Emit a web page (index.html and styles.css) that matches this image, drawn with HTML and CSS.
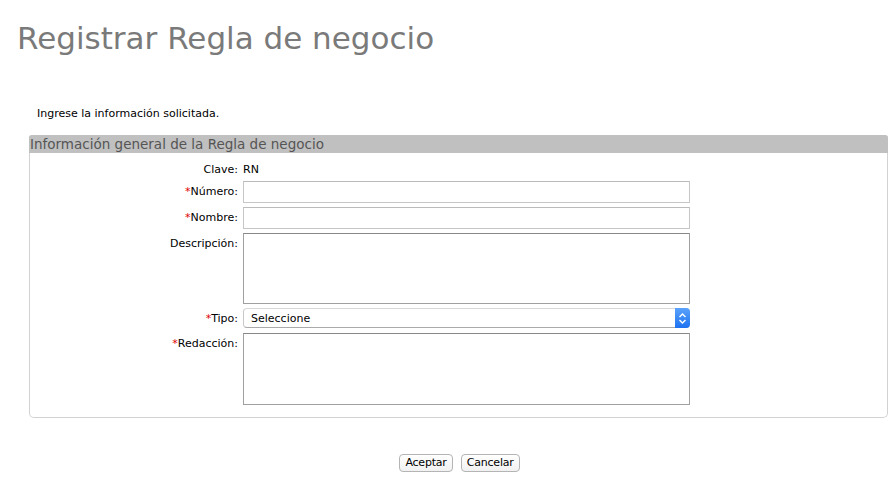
FILE: index.html
```html
<!DOCTYPE html>
<html lang="es">
<head>
<meta charset="utf-8">
<title>Registrar Regla de negocio</title>
<link rel="stylesheet" href="styles.css">
</head>
<body>
<h1 class="title">Registrar Regla de negocio</h1>
<p class="intro">Ingrese la información solicitada.</p>
<section class="panel">
  <div class="panel-head">Información general de la Regla de negocio</div>
  <div class="panel-body">
    <div class="row row-text">
      <span class="label">Clave:</span>
      <span class="value">RN</span>
    </div>
    <div class="row">
      <label class="label"><span class="req">*</span>Número:</label>
      <input class="field" type="text">
    </div>
    <div class="row">
      <label class="label"><span class="req">*</span>Nombre:</label>
      <input class="field" type="text">
    </div>
    <div class="row">
      <label class="label">Descripción:</label>
      <textarea class="area area-desc"></textarea>
    </div>
    <div class="row">
      <label class="label"><span class="req">*</span>Tipo:</label>
      <div class="select-wrap">
        <select class="select"><option>Seleccione</option></select>
        <span class="select-btn">
          <svg width="9" height="13" viewBox="0 0 9 13"><path d="M1.5 5 L4.5 2 L7.5 5 M1.5 8 L4.5 11 L7.5 8" fill="none" stroke="#fff" stroke-width="1.4"/></svg>
        </span>
      </div>
    </div>
    <div class="row row-red">
      <label class="label"><span class="req">*</span>Redacción:</label>
      <textarea class="area"></textarea>
    </div>
  </div>
</section>
<div class="actions">
  <button class="btn" type="button">Aceptar</button>
  <button class="btn" type="button">Cancelar</button>
</div>
</body>
</html>
```

FILE: styles.css
```css
html, body {
  margin: 0;
  padding: 0;
  background: #fff;
}
body {
  font-family: "DejaVu Sans", Verdana, sans-serif;
  font-size: 11px;
  color: #000;
  width: 889px;
}
.title {
  margin: 0;
  padding: 18px 0 0 17px;
  height: 44px;
  font-size: 31px;
  font-weight: normal;
  color: #7a7a7a;
  line-height: 40px;
}
.intro {
  margin: 0;
  padding: 45px 0 0 37px;
  line-height: 14px;
}
.panel {
  margin: 14px 1px 0 29px;
  border: 1px solid #d2d2d2;
  border-top: none;
  border-radius: 3px 3px 5px 5px;
  height: 282px;
}
.panel-head {
  background: #c0c0c0;
  color: #555;
  font-size: 13.5px;
  line-height: 18px;
  height: 18px;
  padding-left: 1px;
  margin: 0 -1px;
  border-radius: 3px 3px 0 0;
}
.panel-body {
  display: flex;
  flex-direction: column;
  gap: 4px;
  padding-top: 10px;
}
.row {
  display: grid;
  grid-template-columns: 208px 447px;
  column-gap: 5px;
  align-items: start;
}
.row-text {
  line-height: 14px;
}
.row-red { margin-top: 1px; }
.label {
  text-align: right;
  color: #000;
  padding-top: 4px;
  line-height: 14px;
}
.row-text .label { padding-top: 0; }
.value { line-height: 14px; }
.req { color: #d00; }
.field {
  box-sizing: border-box;
  width: 447px;
  height: 22px;
  margin: 0;
  border: 1px solid #c6c6c6;
  border-top-color: #bbb;
  padding: 2px 4px;
  font: inherit;
  background: #fff;
  outline: none;
}
.area {
  box-sizing: border-box;
  width: 447px;
  height: 72px;
  margin: 0;
  border: 1px solid #a0a0a0;
  border-top-color: #888;
  padding: 2px;
  font: inherit;
  resize: none;
  display: block;
  outline: none;
}
.area-desc { height: 71px; }
.select-wrap {
  position: relative;
  width: 447px;
  height: 20px;
}
.select {
  -webkit-appearance: none;
  appearance: none;
  box-sizing: border-box;
  width: 447px;
  height: 20px;
  margin: 0;
  border: 1px solid #c8c8c8;
  border-top-color: #d8d8d8;
  border-bottom-color: #aaa;
  border-radius: 4px;
  padding: 0 0 0 7px;
  font: 11px "DejaVu Sans", Verdana, sans-serif;
  color: #000;
  background: #fff;
  outline: none;
  display: block;
}
.select-btn {
  position: absolute;
  top: 0;
  right: 0;
  width: 15px;
  height: 20px;
  border-radius: 0 4px 4px 0;
  background: linear-gradient(#5aa2fb, #1d72f0);
  display: flex;
  align-items: center;
  justify-content: center;
}
.select-btn svg { display: block; }
.actions {
  display: flex;
  justify-content: center;
  gap: 8px;
  padding: 36px 0 0 30px;
}
.btn {
  box-sizing: border-box;
  height: 18px;
  margin: 0;
  padding: 0 5px;
  font: 11px "DejaVu Sans", Verdana, sans-serif;
  letter-spacing: -0.2px;
  color: #000;
  background: linear-gradient(#fff, #f1f1f1);
  border: 1px solid #b4b4b4;
  border-radius: 4px;
  line-height: 16px;
}
```
